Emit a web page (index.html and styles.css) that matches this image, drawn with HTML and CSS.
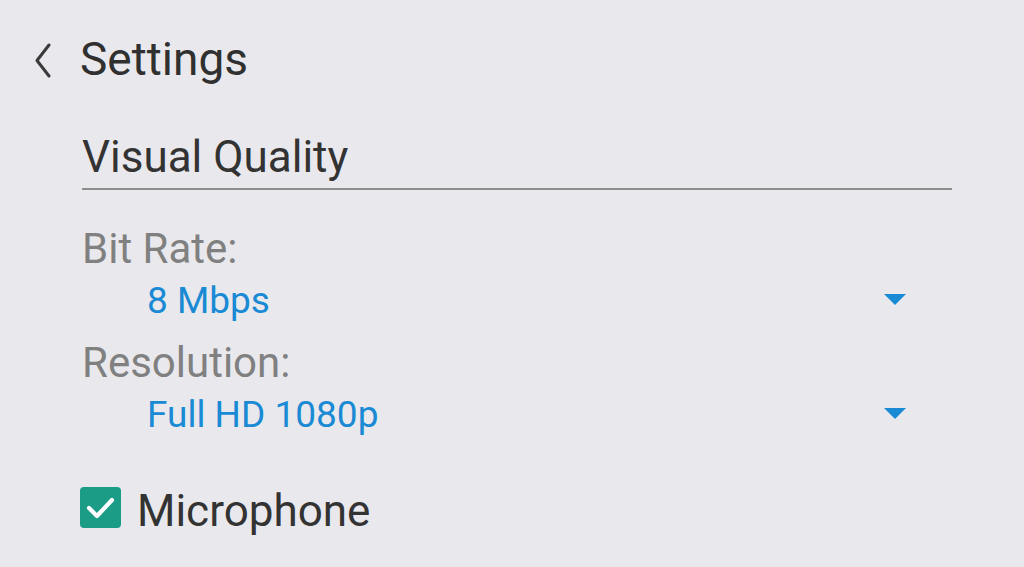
FILE: index.html
```html
<!DOCTYPE html>
<html lang="en">
<head>
<meta charset="utf-8">
<title>Settings</title>
<link rel="stylesheet" href="styles.css">
</head>
<body>
<div class="page">
  <header class="header">
    <svg class="back" width="18" height="36" viewBox="0 0 18 36" aria-hidden="true">
      <path d="M15 3 L3 18.5 L15 34" fill="none" stroke="#3a3a3a" stroke-width="3" stroke-linecap="round" stroke-linejoin="round"/>
    </svg>
    <h1 class="title">Settings</h1>
  </header>
  <main class="content">
    <h2 class="section">Visual Quality</h2>
    <div class="field">
      <div class="label">Bit Rate:</div>
      <div class="select">
        <span class="value">8 Mbps</span>
        <svg class="caret" width="22" height="11" viewBox="0 0 22 11" aria-hidden="true"><path d="M0 0 H22 L11 11 Z" fill="#1a8ad4"/></svg>
      </div>
    </div>
    <div class="field">
      <div class="label">Resolution:</div>
      <div class="select">
        <span class="value">Full HD 1080p</span>
        <svg class="caret" width="22" height="11" viewBox="0 0 22 11" aria-hidden="true"><path d="M0 0 H22 L11 11 Z" fill="#1a8ad4"/></svg>
      </div>
    </div>
    <label class="check">
      <span class="box">
        <svg width="41" height="41" viewBox="0 0 41 41" aria-hidden="true"><path d="M9 21 L17 29 L32 13" fill="none" stroke="#ffffff" stroke-width="4.2" stroke-linecap="round" stroke-linejoin="round"/></svg>
      </span>
      <span class="check-text">Microphone</span>
    </label>
  </main>
</div>
</body>
</html>
```

FILE: styles.css
```css
html, body {
  margin: 0;
  padding: 0;
  background: #e9e9ed;
}
body {
  width: 1024px;
  height: 567px;
  overflow: hidden;
  font-family: Roboto, "Liberation Sans", sans-serif;
  color: #333333;
}
.page {
  display: flex;
  flex-direction: column;
}
.header {
  display: flex;
  align-items: center;
  padding: 33px 0 0 34px;
  height: 52px;
}
.back {
  display: block;
  margin-top: 2px;
}
.title {
  margin: 0 0 0 28px;
  font-size: 46px;
  font-weight: 400;
  line-height: 52px;
  color: #303030;
}
.content {
  display: flex;
  flex-direction: column;
  margin: 46px 72px 0 82px;
}
.section {
  margin: 0;
  font-size: 44px;
  font-weight: 400;
  line-height: 52px;
  padding-bottom: 5px;
  border-bottom: 2px solid #8c8c8c;
  color: #333333;
}
.field {
  display: flex;
  flex-direction: column;
  margin-top: 34px;
}
.field + .field {
  margin-top: 12px;
}
.label {
  font-size: 42px;
  line-height: 50px;
  color: #808080;
}
.select {
  display: flex;
  align-items: flex-start;
  justify-content: space-between;
  margin-top: 2px;
  padding: 0 46px 0 65px;
  height: 50px;
}
.value {
  font-size: 37px;
  line-height: 50px;
  color: #1a8ad4;
}
.caret {
  display: block;
  margin-top: 18px;
}
.check {
  display: flex;
  align-items: flex-start;
  margin-top: 45px;
  margin-left: -2px;
}
.box {
  display: block;
  width: 41px;
  height: 41px;
  margin-top: 2px;
  border-radius: 4px;
  background: #1a9c87;
}
.box svg {
  display: block;
}
.check-text {
  margin-left: 16px;
  font-size: 44px;
  line-height: 52px;
  color: #333333;
}
```
